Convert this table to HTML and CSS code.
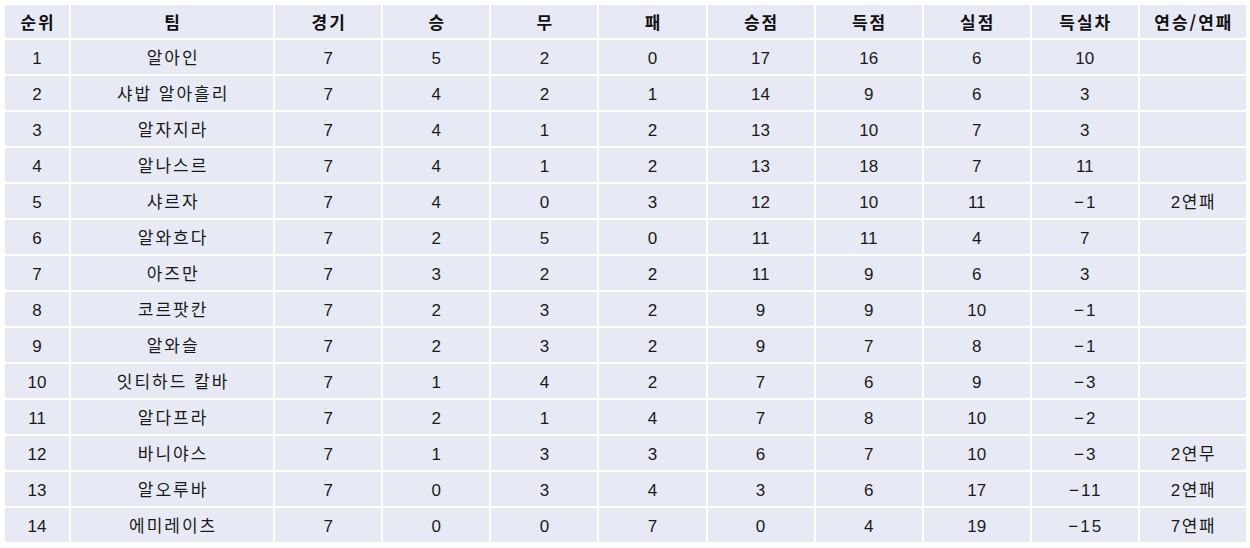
FILE: index.html
```html
<!DOCTYPE html>
<html lang="ko">
<head>
<meta charset="utf-8">
<title>순위</title>
<link rel="stylesheet" href="styles.css">
</head>
<body>
<table class="standings">
  <colgroup>
    <col class="c-rank"><col class="c-team"><col class="c-n"><col class="c-n"><col class="c-n"><col class="c-n"><col class="c-n"><col class="c-n"><col class="c-n"><col class="c-n"><col class="c-n">
  </colgroup>
  <thead>
    <tr><th>순위</th><th>팀</th><th>경기</th><th>승</th><th>무</th><th>패</th><th>승점</th><th>득점</th><th>실점</th><th>득실차</th><th>연승/연패</th></tr>
  </thead>
  <tbody>
    <tr><td>1</td><td class="team">알아인</td><td>7</td><td>5</td><td>2</td><td>0</td><td>17</td><td>16</td><td>6</td><td>10</td><td></td></tr>
    <tr><td>2</td><td class="team">샤밥 알아흘리</td><td>7</td><td>4</td><td>2</td><td>1</td><td>14</td><td>9</td><td>6</td><td>3</td><td></td></tr>
    <tr><td>3</td><td class="team">알자지라</td><td>7</td><td>4</td><td>1</td><td>2</td><td>13</td><td>10</td><td>7</td><td>3</td><td></td></tr>
    <tr><td>4</td><td class="team">알나스르</td><td>7</td><td>4</td><td>1</td><td>2</td><td>13</td><td>18</td><td>7</td><td>11</td><td></td></tr>
    <tr><td>5</td><td class="team">샤르자</td><td>7</td><td>4</td><td>0</td><td>3</td><td>12</td><td>10</td><td>11</td><td class="neg">−1</td><td class="streak">2연패</td></tr>
    <tr><td>6</td><td class="team">알와흐다</td><td>7</td><td>2</td><td>5</td><td>0</td><td>11</td><td>11</td><td>4</td><td>7</td><td></td></tr>
    <tr><td>7</td><td class="team">아즈만</td><td>7</td><td>3</td><td>2</td><td>2</td><td>11</td><td>9</td><td>6</td><td>3</td><td></td></tr>
    <tr><td>8</td><td class="team">코르팟칸</td><td>7</td><td>2</td><td>3</td><td>2</td><td>9</td><td>9</td><td>10</td><td class="neg">−1</td><td></td></tr>
    <tr><td>9</td><td class="team">알와슬</td><td>7</td><td>2</td><td>3</td><td>2</td><td>9</td><td>7</td><td>8</td><td class="neg">−1</td><td></td></tr>
    <tr><td>10</td><td class="team">잇티하드 칼바</td><td>7</td><td>1</td><td>4</td><td>2</td><td>7</td><td>6</td><td>9</td><td class="neg">−3</td><td></td></tr>
    <tr><td>11</td><td class="team">알다프라</td><td>7</td><td>2</td><td>1</td><td>4</td><td>7</td><td>8</td><td>10</td><td class="neg">−2</td><td></td></tr>
    <tr><td>12</td><td class="team">바니야스</td><td>7</td><td>1</td><td>3</td><td>3</td><td>6</td><td>7</td><td>10</td><td class="neg">−3</td><td class="streak">2연무</td></tr>
    <tr><td>13</td><td class="team">알오루바</td><td>7</td><td>0</td><td>3</td><td>4</td><td>3</td><td>6</td><td>17</td><td class="neg">−11</td><td class="streak">2연패</td></tr>
    <tr><td>14</td><td class="team">에미레이츠</td><td>7</td><td>0</td><td>0</td><td>7</td><td>0</td><td>4</td><td>19</td><td class="neg">−15</td><td class="streak">7연패</td></tr>
  </tbody>
</table>
</body>
</html>
```
FILE: styles.css
```css
html, body {
  margin: 0;
  padding: 0;
  background: #ffffff;
}

.standings {
  margin: 3px;
  border-collapse: separate;
  border-spacing: 2px;
  table-layout: fixed;
  width: 1245px;
  font-family: "Liberation Sans", "Noto Sans CJK KR", sans-serif;
  font-size: 17px;
  color: #1a1a1a;
}

.c-rank { width: 64px; }
.c-team { width: 202px; }
.c-n { width: 106px; }

.standings th,
.standings td {
  background: #e7eaf4;
  text-align: center;
  vertical-align: middle;
  padding: 0;
  line-height: 20px;
}

.standings thead tr {
  height: 33px;
}

.standings tbody tr {
  height: 34px;
}

.standings th {
  font-weight: bold;
  font-family: "Noto Sans CJK KR", sans-serif;
  letter-spacing: 2px;
  text-indent: 2px;
  color: #111111;
}

.standings td {
  padding-top: 4px;
  font-weight: normal;
}

.standings td.team {
  letter-spacing: 2px;
  text-indent: 2px;
}

.standings td.neg {
  letter-spacing: 2px;
  text-indent: 2px;
}

.standings td.streak {
  letter-spacing: 1.5px;
  text-indent: 1px;
}
```
